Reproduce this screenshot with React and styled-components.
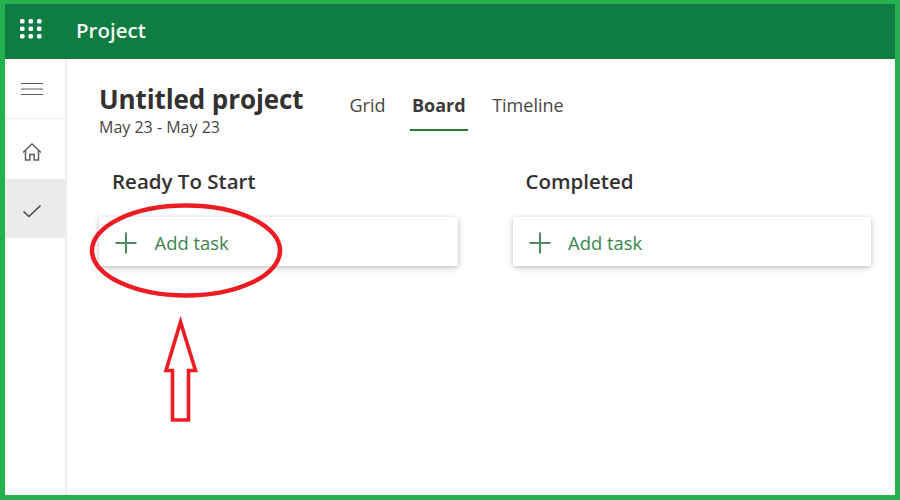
import styled, { createGlobalStyle } from 'styled-components';

const GlobalStyle = createGlobalStyle`
  html, body {
    margin: 0;
    padding: 0;
    background: #fff;
  }
  body {
    font-family: "Open Sans", "Noto Sans", "Liberation Sans", sans-serif;
  }
`;

const Frame = styled.div`
  position: relative;
  box-sizing: border-box;
  width: 900px;
  height: 500px;
  overflow: hidden;
  border: solid #22b14c;
  border-width: 4px 5px 5px 5px;
  display: flex;
  flex-direction: column;
`;

const TopBar = styled.header`
  flex: 0 0 55px;
  display: flex;
  align-items: center;
  background: #107c41;
  color: #f2f8f4;
`;

const Waffle = styled.div`
  width: 71px;
  display: flex;
  padding: 0 0 6px 15px;
  box-sizing: border-box;
`;

const AppName = styled.span`
  font-size: 20.5px;
  font-weight: 600;
  padding-bottom: 3px;
`;

const Body = styled.div`
  flex: 1;
  display: flex;
  min-height: 0;
`;

const Rail = styled.nav`
  flex: 0 0 60px;
  border-right: 2px solid #efeeed;
  box-sizing: content-box;
  margin-right: -1px;
  display: flex;
  flex-direction: column;
`;

const RailItem = styled.div`
  height: ${p => p.$height}px;
  display: flex;
  align-items: center;
  justify-content: center;
  padding-right: 6px;
  padding-top: ${p => p.$nudge || 0}px;
  background: ${p => (p.$active ? '#edebe9' : 'transparent')};
  border-bottom: ${p => (p.$divider ? '1px solid #edebe9' : 'none')};
  box-sizing: border-box;
  color: #484644;
`;

const Main = styled.main`
  flex: 1;
  padding: 23px 0 0 33px;
  min-width: 0;
`;

const TitleRow = styled.div`
  display: flex;
  align-items: flex-start;
  gap: 44px;
`;

const Title = styled.h1`
  margin: 0;
  font-size: 26px;
  line-height: 34px;
  font-weight: 700;
  color: #323130;
  letter-spacing: -0.1px;
`;

const DateRange = styled.div`
  font-size: 16px;
  line-height: 22px;
  color: #484644;
`;

const Tabs = styled.div`
  display: flex;
  gap: 22.5px;
  margin-top: 9px;
`;

const Tab = styled.div`
  font-size: 18px;
  line-height: 28px;
  font-weight: ${p => (p.$active ? 700 : 400)};
  color: ${p => (p.$active ? '#3b3a39' : '#484644')};
  padding: 0 2px 10px;
  border-bottom: 2px solid ${p => (p.$active ? '#2a7a35' : 'transparent')};
`;

const Columns = styled.div`
  display: flex;
  gap: 55px;
  margin-top: 29px;
`;

const Column = styled.section`
  width: 358.5px;
`;

const ColumnTitle = styled.h2`
  margin: 0 0 22px 13px;
  font-size: 20.5px;
  line-height: 28px;
  font-weight: 600;
  color: #323130;
`;

const AddCard = styled.div`
  height: 49px;
  display: flex;
  align-items: center;
  gap: 16.5px;
  padding: 2px 0 0 15px;
  box-sizing: border-box;
  background: #fff;
  border-radius: 2px;
  box-shadow: 0 1px 5px rgba(0, 0, 0, 0.22), 0 3px 8px rgba(0, 0, 0, 0.08);
  color: #3a8450;
  font-size: 18.4px;
`;

const Markup = styled.svg`
  position: absolute;
  left: -5px;
  top: -4px;
  pointer-events: none;
`;

function PlusIcon() {
  return (
    <svg width="24" height="24" viewBox="0 0 24 24">
      <path d="M12 1.5v21M1.5 12h21" stroke="#4f8a5f" strokeWidth="2" fill="none" />
    </svg>
  );
}

function WaffleIcon() {
  const dots = [];
  for (let r = 0; r < 3; r++) {
    for (let c = 0; c < 3; c++) {
      dots.push(
        <rect key={`${r}-${c}`} x={c * 8.5} y={r * 7.5} width="4.6" height="4.6" rx="1.6" fill="#fff" />
      );
    }
  }
  return (
    <svg width="22" height="20" viewBox="0 0 22 20">
      {dots}
    </svg>
  );
}

function MenuIcon() {
  return (
    <svg width="24" height="14" viewBox="0 0 24 14">
      <path d="M1 1.5h22M1 7h22M1 12.5h22" stroke="#605e5c" strokeWidth="1.2" fill="none" />
    </svg>
  );
}

function HomeIcon() {
  return (
    <svg width="20" height="18" viewBox="0 0 20 18" fill="none" stroke="#605e5c" strokeWidth="1.5">
      <path d="M1 9.5L10 1l9 8.5M3.5 7.5V17h4.3v-5.5h4.4V17h4.3V7.5" />
    </svg>
  );
}

function CheckIcon() {
  return (
    <svg width="20" height="14" viewBox="0 0 20 14" fill="none" stroke="#484644" strokeWidth="1.6">
      <path d="M1.5 7.5l5.5 5L18.5 1.5" />
    </svg>
  );
}

function TaskColumn({ name }) {
  return (
    <Column>
      <ColumnTitle>{name}</ColumnTitle>
      <AddCard>
        <PlusIcon />
        Add task
      </AddCard>
    </Column>
  );
}

export default function App() {
  return (
    <>
      <GlobalStyle />
      <Frame>
        <TopBar>
          <Waffle>
            <WaffleIcon />
          </Waffle>
          <AppName>Project</AppName>
        </TopBar>
        <Body>
          <Rail>
            <RailItem $height={60} $divider>
              <MenuIcon />
            </RailItem>
            <RailItem $height={60} $nudge={6}>
              <HomeIcon />
            </RailItem>
            <RailItem $height={59} $active $nudge={4}>
              <CheckIcon />
            </RailItem>
          </Rail>
          <Main>
            <TitleRow>
              <div>
                <Title>Untitled project</Title>
                <DateRange>May 23 - May 23</DateRange>
              </div>
              <Tabs>
                <Tab>Grid</Tab>
                <Tab $active>Board</Tab>
                <Tab>Timeline</Tab>
              </Tabs>
            </TitleRow>
            <Columns>
              <TaskColumn name="Ready To Start" />
              <TaskColumn name="Completed" />
            </Columns>
          </Main>
        </Body>
        <Markup width="900" height="500" viewBox="0 0 900 500" fill="none" stroke="#ed1c24">
          <ellipse cx="186" cy="250.5" rx="94" ry="45" strokeWidth="4.5" />
          <path
            d="M180.5 322L166 370.5H172.5V420H188.5V370.5H195.5Z"
            strokeWidth="3.6"
            strokeLinejoin="miter"
          />
        </Markup>
      </Frame>
    </>
  );
}
